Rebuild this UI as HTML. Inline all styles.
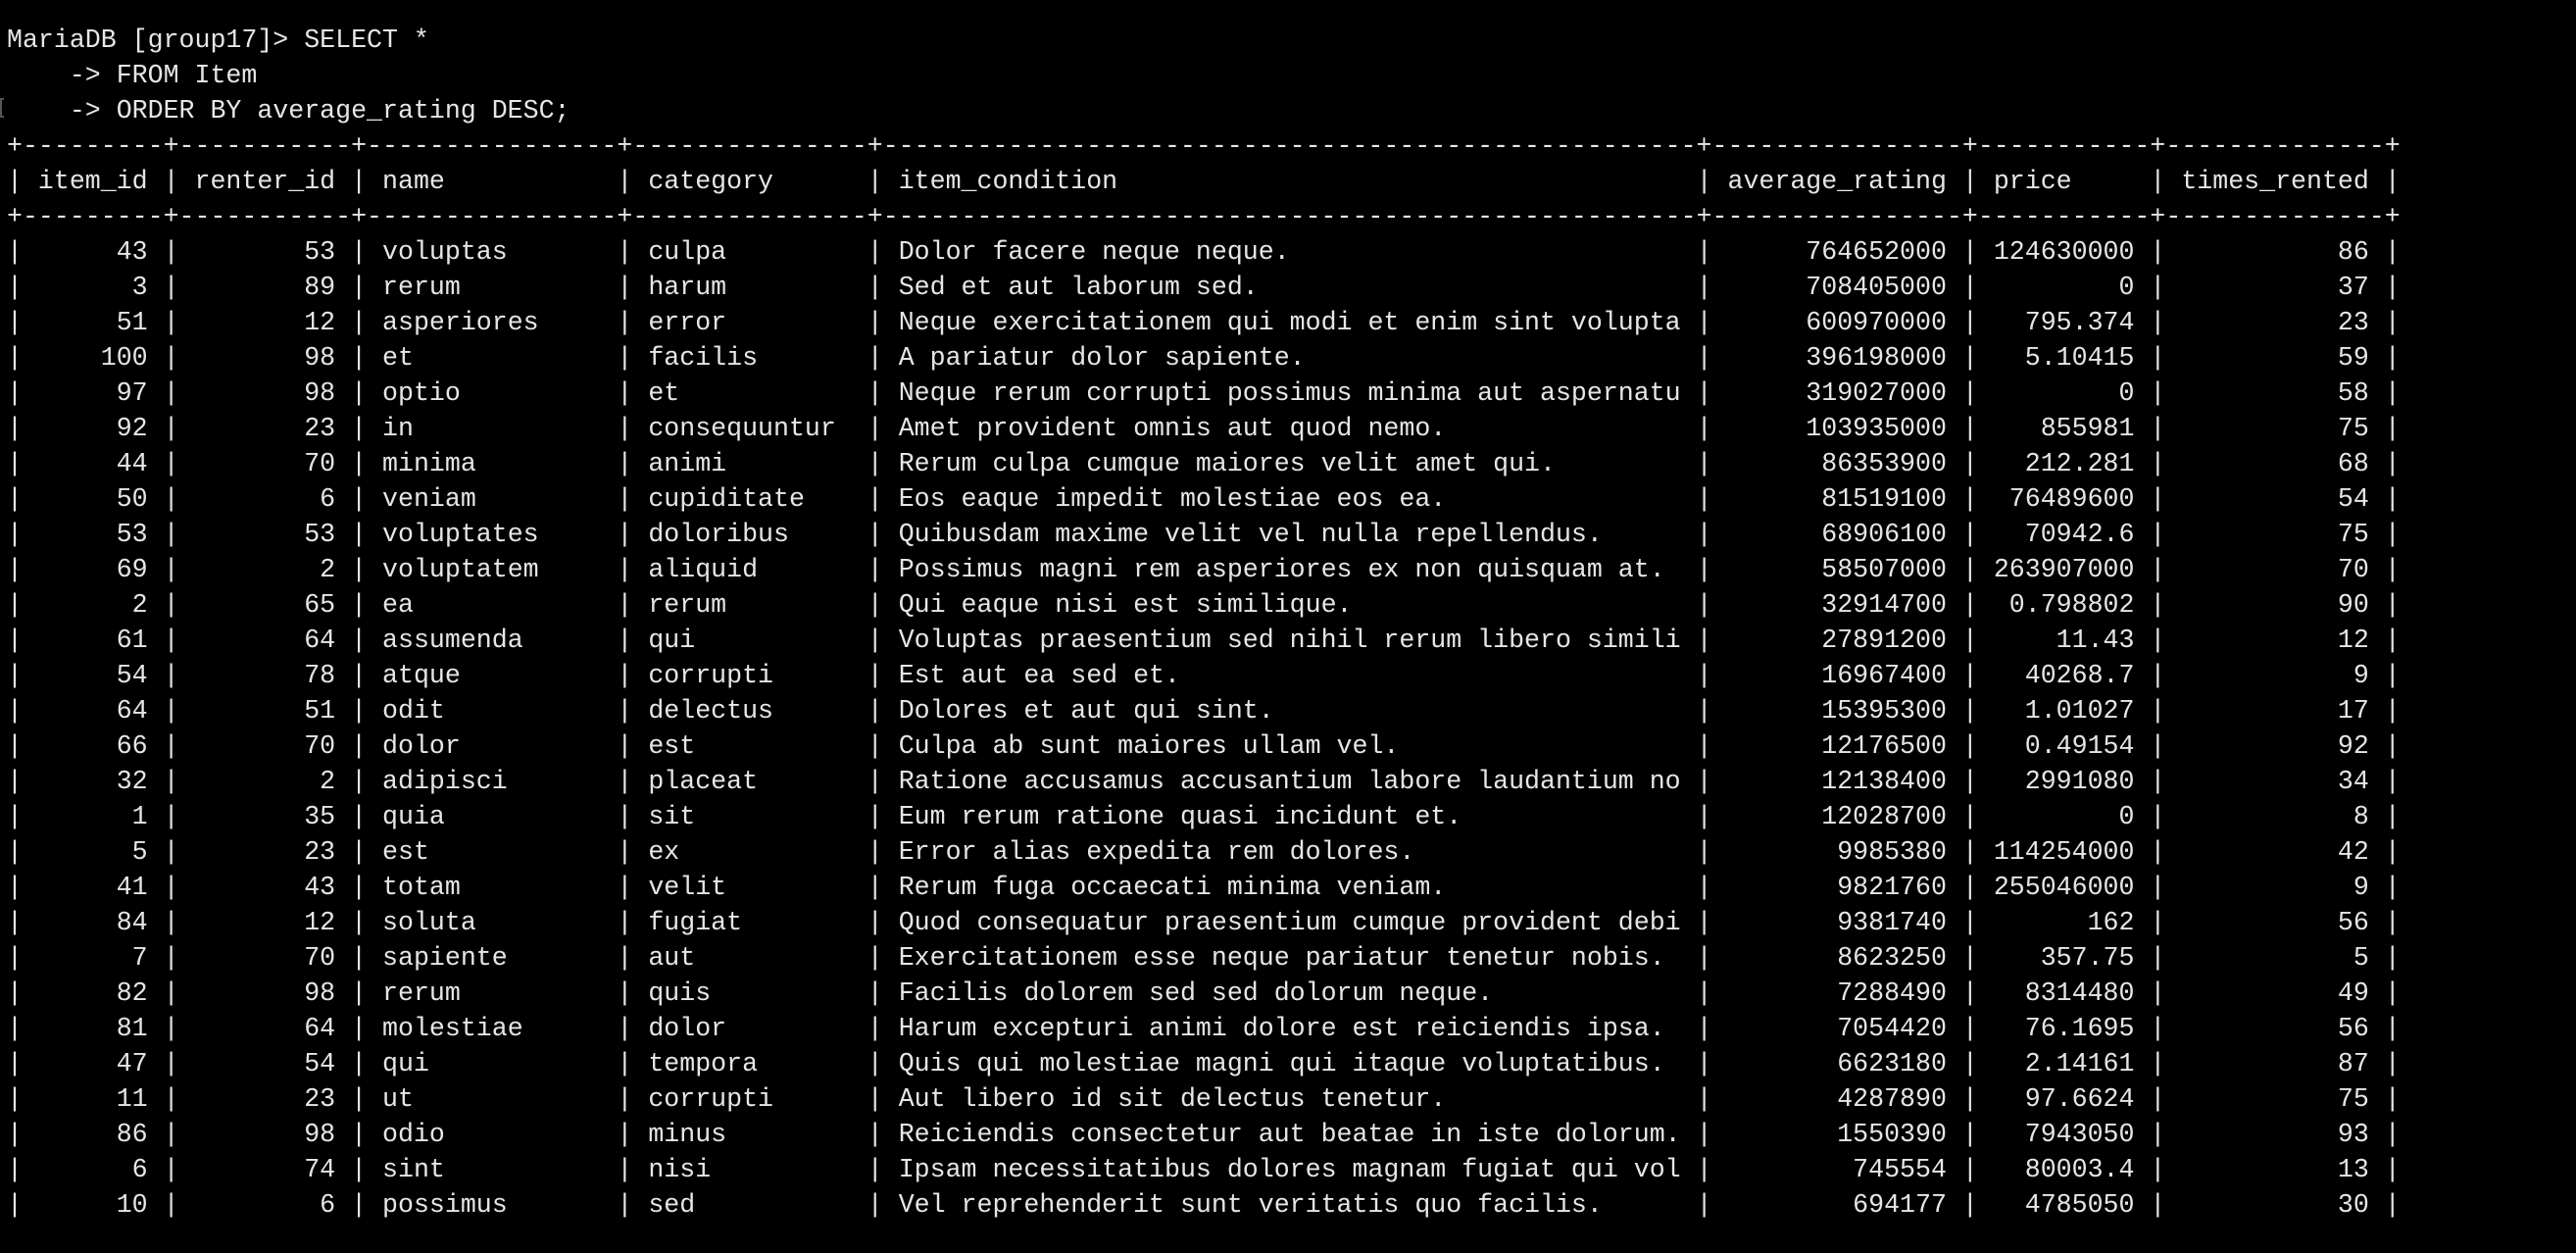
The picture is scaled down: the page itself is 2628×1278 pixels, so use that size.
<!DOCTYPE html>
<html><head><meta charset="utf-8"><style>
html,body{margin:0;background:#000;width:2628px;height:1278px;overflow:hidden}
pre{margin:0;position:absolute;left:7px;top:23px;font-family:"Liberation Mono",monospace;font-size:26.6px;line-height:36px;color:#e6e6e6;white-space:pre}
i{font-style:normal;display:inline-block;vertical-align:top}
.a{width:7ch;text-align:right}.b{width:9ch;text-align:right}.c{width:14ch}.d{width:13ch}.e{width:50ch}.f{width:14ch;text-align:right}.g{width:9ch;text-align:right}.h{width:12ch;text-align:right}
.cur{position:absolute;left:0;top:100px;width:4px;height:20px;border:2px solid #555;border-right:none;box-sizing:border-box}
</style></head><body>
<div class="cur"></div>
<pre>MariaDB [group17]&gt; SELECT *
    -&gt; FROM Item
    -&gt; ORDER BY average_rating DESC;
+---------+-----------+----------------+---------------+----------------------------------------------------+----------------+-----------+--------------+
| <i class=a>item_id</i> | <i class=b>renter_id</i> | <i class=c>name</i> | <i class=d>category</i> | <i class=e>item_condition</i> | <i class=f>average_rating</i> | <i class=g style="text-align:left">price</i> | <i class=h>times_rented</i> |
+---------+-----------+----------------+---------------+----------------------------------------------------+----------------+-----------+--------------+
| <i class=a>43</i> | <i class=b>53</i> | <i class=c>voluptas</i> | <i class=d>culpa</i> | <i class=e>Dolor facere neque neque.</i> | <i class=f>764652000</i> | <i class=g>124630000</i> | <i class=h>86</i> |
| <i class=a>3</i> | <i class=b>89</i> | <i class=c>rerum</i> | <i class=d>harum</i> | <i class=e>Sed et aut laborum sed.</i> | <i class=f>708405000</i> | <i class=g>0</i> | <i class=h>37</i> |
| <i class=a>51</i> | <i class=b>12</i> | <i class=c>asperiores</i> | <i class=d>error</i> | <i class=e>Neque exercitationem qui modi et enim sint volupta</i> | <i class=f>600970000</i> | <i class=g>795.374</i> | <i class=h>23</i> |
| <i class=a>100</i> | <i class=b>98</i> | <i class=c>et</i> | <i class=d>facilis</i> | <i class=e>A pariatur dolor sapiente.</i> | <i class=f>396198000</i> | <i class=g>5.10415</i> | <i class=h>59</i> |
| <i class=a>97</i> | <i class=b>98</i> | <i class=c>optio</i> | <i class=d>et</i> | <i class=e>Neque rerum corrupti possimus minima aut aspernatu</i> | <i class=f>319027000</i> | <i class=g>0</i> | <i class=h>58</i> |
| <i class=a>92</i> | <i class=b>23</i> | <i class=c>in</i> | <i class=d>consequuntur</i> | <i class=e>Amet provident omnis aut quod nemo.</i> | <i class=f>103935000</i> | <i class=g>855981</i> | <i class=h>75</i> |
| <i class=a>44</i> | <i class=b>70</i> | <i class=c>minima</i> | <i class=d>animi</i> | <i class=e>Rerum culpa cumque maiores velit amet qui.</i> | <i class=f>86353900</i> | <i class=g>212.281</i> | <i class=h>68</i> |
| <i class=a>50</i> | <i class=b>6</i> | <i class=c>veniam</i> | <i class=d>cupiditate</i> | <i class=e>Eos eaque impedit molestiae eos ea.</i> | <i class=f>81519100</i> | <i class=g>76489600</i> | <i class=h>54</i> |
| <i class=a>53</i> | <i class=b>53</i> | <i class=c>voluptates</i> | <i class=d>doloribus</i> | <i class=e>Quibusdam maxime velit vel nulla repellendus.</i> | <i class=f>68906100</i> | <i class=g>70942.6</i> | <i class=h>75</i> |
| <i class=a>69</i> | <i class=b>2</i> | <i class=c>voluptatem</i> | <i class=d>aliquid</i> | <i class=e>Possimus magni rem asperiores ex non quisquam at.</i> | <i class=f>58507000</i> | <i class=g>263907000</i> | <i class=h>70</i> |
| <i class=a>2</i> | <i class=b>65</i> | <i class=c>ea</i> | <i class=d>rerum</i> | <i class=e>Qui eaque nisi est similique.</i> | <i class=f>32914700</i> | <i class=g>0.798802</i> | <i class=h>90</i> |
| <i class=a>61</i> | <i class=b>64</i> | <i class=c>assumenda</i> | <i class=d>qui</i> | <i class=e>Voluptas praesentium sed nihil rerum libero simili</i> | <i class=f>27891200</i> | <i class=g>11.43</i> | <i class=h>12</i> |
| <i class=a>54</i> | <i class=b>78</i> | <i class=c>atque</i> | <i class=d>corrupti</i> | <i class=e>Est aut ea sed et.</i> | <i class=f>16967400</i> | <i class=g>40268.7</i> | <i class=h>9</i> |
| <i class=a>64</i> | <i class=b>51</i> | <i class=c>odit</i> | <i class=d>delectus</i> | <i class=e>Dolores et aut qui sint.</i> | <i class=f>15395300</i> | <i class=g>1.01027</i> | <i class=h>17</i> |
| <i class=a>66</i> | <i class=b>70</i> | <i class=c>dolor</i> | <i class=d>est</i> | <i class=e>Culpa ab sunt maiores ullam vel.</i> | <i class=f>12176500</i> | <i class=g>0.49154</i> | <i class=h>92</i> |
| <i class=a>32</i> | <i class=b>2</i> | <i class=c>adipisci</i> | <i class=d>placeat</i> | <i class=e>Ratione accusamus accusantium labore laudantium no</i> | <i class=f>12138400</i> | <i class=g>2991080</i> | <i class=h>34</i> |
| <i class=a>1</i> | <i class=b>35</i> | <i class=c>quia</i> | <i class=d>sit</i> | <i class=e>Eum rerum ratione quasi incidunt et.</i> | <i class=f>12028700</i> | <i class=g>0</i> | <i class=h>8</i> |
| <i class=a>5</i> | <i class=b>23</i> | <i class=c>est</i> | <i class=d>ex</i> | <i class=e>Error alias expedita rem dolores.</i> | <i class=f>9985380</i> | <i class=g>114254000</i> | <i class=h>42</i> |
| <i class=a>41</i> | <i class=b>43</i> | <i class=c>totam</i> | <i class=d>velit</i> | <i class=e>Rerum fuga occaecati minima veniam.</i> | <i class=f>9821760</i> | <i class=g>255046000</i> | <i class=h>9</i> |
| <i class=a>84</i> | <i class=b>12</i> | <i class=c>soluta</i> | <i class=d>fugiat</i> | <i class=e>Quod consequatur praesentium cumque provident debi</i> | <i class=f>9381740</i> | <i class=g>162</i> | <i class=h>56</i> |
| <i class=a>7</i> | <i class=b>70</i> | <i class=c>sapiente</i> | <i class=d>aut</i> | <i class=e>Exercitationem esse neque pariatur tenetur nobis.</i> | <i class=f>8623250</i> | <i class=g>357.75</i> | <i class=h>5</i> |
| <i class=a>82</i> | <i class=b>98</i> | <i class=c>rerum</i> | <i class=d>quis</i> | <i class=e>Facilis dolorem sed sed dolorum neque.</i> | <i class=f>7288490</i> | <i class=g>8314480</i> | <i class=h>49</i> |
| <i class=a>81</i> | <i class=b>64</i> | <i class=c>molestiae</i> | <i class=d>dolor</i> | <i class=e>Harum excepturi animi dolore est reiciendis ipsa.</i> | <i class=f>7054420</i> | <i class=g>76.1695</i> | <i class=h>56</i> |
| <i class=a>47</i> | <i class=b>54</i> | <i class=c>qui</i> | <i class=d>tempora</i> | <i class=e>Quis qui molestiae magni qui itaque voluptatibus.</i> | <i class=f>6623180</i> | <i class=g>2.14161</i> | <i class=h>87</i> |
| <i class=a>11</i> | <i class=b>23</i> | <i class=c>ut</i> | <i class=d>corrupti</i> | <i class=e>Aut libero id sit delectus tenetur.</i> | <i class=f>4287890</i> | <i class=g>97.6624</i> | <i class=h>75</i> |
| <i class=a>86</i> | <i class=b>98</i> | <i class=c>odio</i> | <i class=d>minus</i> | <i class=e>Reiciendis consectetur aut beatae in iste dolorum.</i> | <i class=f>1550390</i> | <i class=g>7943050</i> | <i class=h>93</i> |
| <i class=a>6</i> | <i class=b>74</i> | <i class=c>sint</i> | <i class=d>nisi</i> | <i class=e>Ipsam necessitatibus dolores magnam fugiat qui vol</i> | <i class=f>745554</i> | <i class=g>80003.4</i> | <i class=h>13</i> |
| <i class=a>10</i> | <i class=b>6</i> | <i class=c>possimus</i> | <i class=d>sed</i> | <i class=e>Vel reprehenderit sunt veritatis quo facilis.</i> | <i class=f>694177</i> | <i class=g>4785050</i> | <i class=h>30</i> |</pre>
</body></html>
